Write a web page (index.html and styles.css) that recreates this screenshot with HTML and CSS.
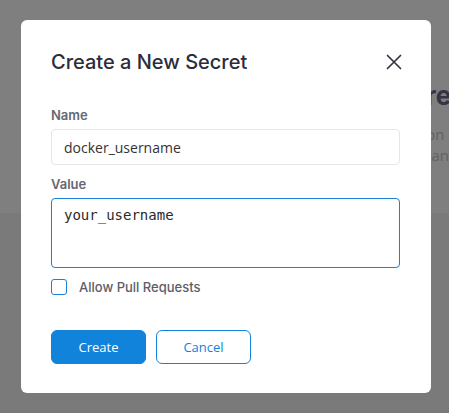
FILE: index.html
```html
<!DOCTYPE html>
<html lang="en">
<head>
<meta charset="utf-8">
<title>Create a New Secret</title>
<link rel="stylesheet" href="styles.css">
</head>
<body>
<div class="page">
  <div class="page-top">
    <h1 class="page-title">Secrets</h1>
    <p class="page-text page-text-first">Secrets are stored encrypted on</p>
    <p class="page-text page-text-second">the server and</p>
  </div>
  <div class="page-bottom"></div>
</div>
<div class="overlay">
  <div class="modal">
    <div class="modal-header">
      <h2 class="modal-title">Create a New Secret</h2>
      <button class="close-btn" aria-label="Close">
        <svg width="16" height="16" viewBox="0 0 16 16"><path d="M1.5 1.5 L14.5 14.5 M14.5 1.5 L1.5 14.5" stroke="#33333f" stroke-width="1.7" stroke-linecap="round" fill="none"/></svg>
      </button>
    </div>
    <label class="field-label">Name</label>
    <input class="text-input" type="text" value="docker_username">
    <label class="field-label field-label-gap">Value</label>
    <textarea class="text-area">your_username</textarea>
    <div class="check-row">
      <span class="checkbox"></span>
      <span class="check-label">Allow Pull Requests</span>
    </div>
    <div class="actions">
      <button class="btn btn-primary">Create</button>
      <button class="btn btn-secondary">Cancel</button>
    </div>
  </div>
</div>
</body>
</html>
```
FILE: styles.css
```css
html, body {
  margin: 0;
  padding: 0;
  width: 449px;
  height: 413px;
  overflow: hidden;
}
body {
  font-family: "Inter", "Noto Sans", sans-serif;
  background: #f5f5f6;
}
.page {
  width: 449px;
  height: 413px;
  display: flex;
  flex-direction: column;
}
.page-top {
  height: 213px;
  background: #ffffff;
  box-sizing: border-box;
  padding: 80px 0 0 389px;
  white-space: nowrap;
  overflow: hidden;
}
.page-title {
  margin: 0 0 0 -11px;
  font-size: 26px;
  line-height: 32px;
  font-weight: 700;
  color: #6a6a8a;
}
.page-text {
  margin: 0;
  font-family: "Open Sans", sans-serif;
  font-size: 15px;
  line-height: 21px;
  color: #c4c4c4;
}
.page-text-first {
  margin-top: 12px;
  margin-left: -168px;
}
.page-text-second {
  margin-left: -32px;
}
.page-bottom {
  flex: 1;
  background: #f5f5f7;
}
.overlay {
  position: fixed;
  inset: 0;
  background: rgba(0, 0, 0, 0.5);
  padding: 20px 0 0 21px;
  box-sizing: border-box;
}
.modal {
  width: 410px;
  background: #ffffff;
  border-radius: 6px;
  box-sizing: border-box;
  padding: 30px 31px 29px 30px;
  display: flex;
  flex-direction: column;
}
.modal-header {
  display: flex;
  align-items: center;
  justify-content: space-between;
  height: 24px;
}
.modal-title {
  margin: 0;
  font-size: 20px;
  line-height: 24px;
  font-weight: 500;
  color: #2c2c3a;
}
.close-btn {
  border: 0;
  background: none;
  padding: 0;
  margin-right: -2px;
  width: 16px;
  height: 16px;
  display: flex;
}
.field-label {
  display: block;
  font-size: 13px;
  line-height: 16px;
  font-weight: 600;
  color: #656872;
  margin-top: 33px;
  margin-bottom: 6px;
}
.field-label-gap {
  margin-top: 11px;
}
.text-input {
  display: block;
  box-sizing: border-box;
  width: 100%;
  height: 36px;
  margin: 0;
  border: 1px solid #e3e6ea;
  border-radius: 4px;
  padding: 0 12px;
  font-family: "Open Sans", sans-serif;
  font-size: 14px;
  color: #333333;
  outline: none;
}
.text-area {
  display: block;
  box-sizing: border-box;
  width: 100%;
  height: 70px;
  margin: 0;
  border: 1px solid #1a80d8;
  border-radius: 4px;
  padding: 8px 12px;
  font-family: "DejaVu Sans Mono", monospace;
  font-size: 14px;
  line-height: 17px;
  color: #2a2a2a;
  resize: none;
  outline: none;
}
.check-row {
  display: flex;
  align-items: center;
  gap: 12px;
  margin-top: 11px;
  height: 16px;
}
.checkbox {
  width: 16px;
  height: 16px;
  box-sizing: border-box;
  border: 1.5px solid #1a80d8;
  border-radius: 3px;
  background: #fff;
}
.check-label {
  font-size: 13px;
  line-height: 16px;
  font-weight: 500;
  color: #5d5d66;
}
.actions {
  display: flex;
  gap: 10px;
  margin-top: 35px;
}
.btn {
  width: 95px;
  height: 34px;
  box-sizing: border-box;
  border-radius: 6px;
  font-family: "Open Sans", sans-serif;
  font-size: 13px;
  padding: 0;
}
.btn-primary {
  background: #1283db;
  border: 1px solid #1283db;
  color: #ffffff;
}
.btn-secondary {
  background: #ffffff;
  border: 1px solid #1283db;
  color: #1283db;
}
```
